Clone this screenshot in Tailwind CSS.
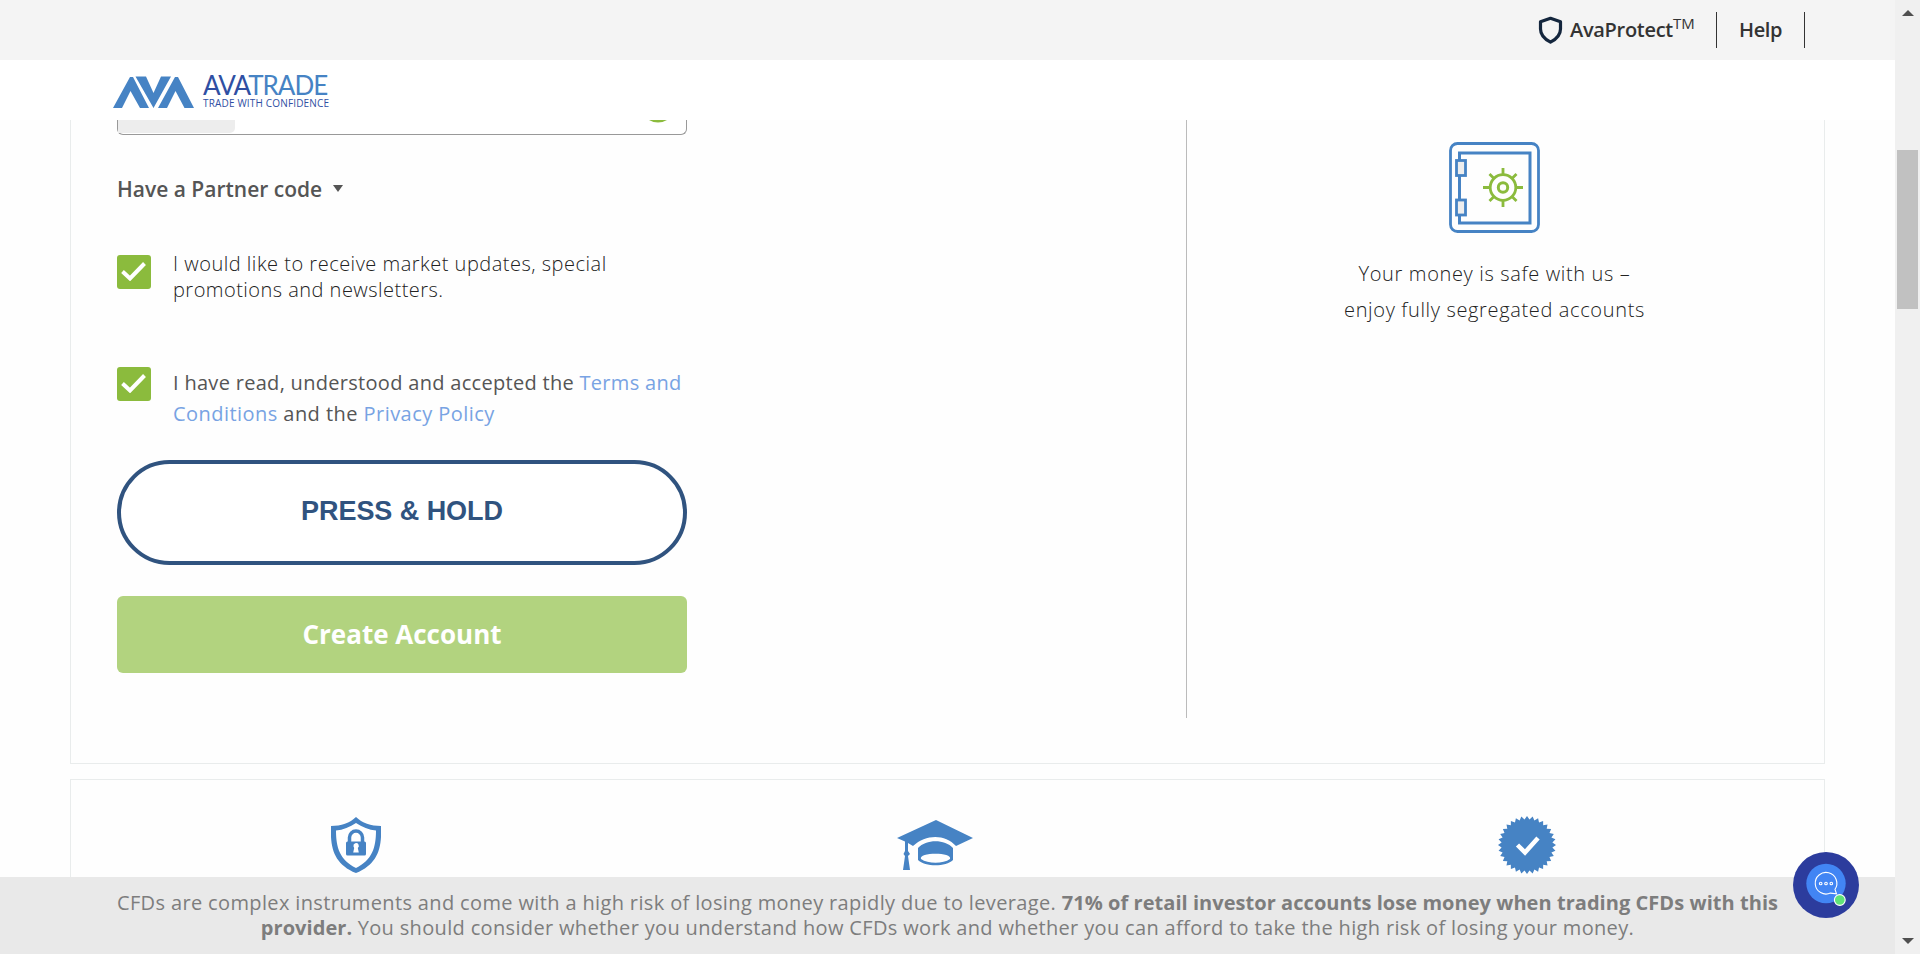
<!DOCTYPE html>
<html lang="en">
<head>
<meta charset="utf-8">
<title>AvaTrade</title>
<script src="https://cdn.jsdelivr.net/npm/@tailwindcss/browser@4"></script>
</head>
<body class="relative flex h-[954px] w-[1920px] overflow-hidden bg-[#fefefe] font-['Open_Sans',sans-serif] whitespace-nowrap">
<div class="flex w-[1895px] flex-col">
  <div class="flex h-[60px] shrink-0 items-center bg-[#f4f4f4] pl-[1538px] text-[20px] leading-[30px] font-semibold text-[#333]">
    <svg class="h-[28px] w-[25px] shrink-0" viewBox="0 0 25 28" fill="none" stroke="#14263d" stroke-width="3.2" stroke-linejoin="round"><path d="M12.500 2.300 22.500 5.800V13c0 6-3.800 10-10 13.200C6.300 23 2.500 19 2.500 13V5.800Z"/></svg>
    <div class="ml-[7px] flex w-[146px] items-center"><span class="tracking-[-0.3px]">AvaProtect</span><span class="pb-[15px] text-[15px] font-normal">TM</span></div>
    <div class="h-9 w-px bg-[#333]"></div>
    <div class="w-[87px] pl-[22px] tracking-[-0.4px]">Help</div>
    <div class="h-9 w-px bg-[#333]"></div>
  </div>
  <header class="flex h-[60px] shrink-0 items-start bg-white pt-[15px] pl-[113px]">
    <svg class="mt-px h-8 w-[81px]" viewBox="0 0 81 32" fill="#4683c4"><path d="M0 32 17 1h3L36 32h-9L17.500 15 9 32Z"/><path d="M22.500.5H33L40.500 17 48 .5h10L40.500 32Z"/><path d="M45 32 62 1h3l16 31h-9.500L62.500 15 54 32Z"/></svg>
    <div class="ml-[9px]">
      <div class="h-[22px] font-['Lato',sans-serif] text-[26px] leading-[20px] font-normal tracking-[-1px] text-[#2f4fa3]">AVA<span class="text-[#4683c4]">TRADE</span></div>
      <div class="text-[10px] leading-[13px] font-medium tracking-[0.17px] text-[#2f4fa3]">TRADE WITH CONFIDENCE</div>
    </div>
  </header>
  <main class="min-h-0 flex-1 overflow-hidden">
    <section class="ml-[70px] flex h-[644px] w-[1755px] border-x border-b border-[#e9ecec] bg-[#fefefe]">
      <div class="w-[1115px] pl-[46px]">
        <div class="flex h-[15px] w-[570px] items-start justify-between rounded-b-[6px] border-x border-b border-[#999] bg-white pr-[18px]">
          <div class="h-[13px] w-[117px] rounded-br-[5px] bg-[#ededed]"></div>
          <svg class="h-[3px] w-[20px]" viewBox="0 0 20 3" fill="#8bbb3d"><path d="M1 0h18q-9 5-18 0Z"/></svg>
        </div>
        <div class="mt-[40px] flex h-[29px] items-center gap-[11px] text-[21px] leading-[29px] font-semibold text-[#555]">
          <span>Have a Partner code</span>
          <svg class="mb-[3px] h-[7px] w-[10px]" viewBox="0 0 10 7" fill="#555"><path d="M0 0h10L5 7Z"/></svg>
        </div>
        <div class="mt-[47px] flex h-[52px] items-start text-[20px] leading-[26px] font-light text-[#222]">
          <div class="mt-1 mr-[22px] flex h-[34px] w-[34px] items-center justify-center rounded-[3px] bg-[#8bbb3d]"><svg class="mr-[2px] mb-px h-[19px] w-[25px]" viewBox="0 0 25 19" fill="none" stroke="#fff" stroke-width="4"><path d="m1.500 9.500 7.500 7L23.500 1.500"/></svg></div>
          <p><span class="tracking-[0.5px]">I would like to receive market updates, special</span><br><span class="tracking-[0.47px]">promotions and newsletters.</span></p>
        </div>
        <div class="mt-[64px] flex h-[62px] items-start text-[20px] leading-[31px] font-normal text-[#555]">
          <div class="mr-[22px] flex h-[34px] w-[34px] items-center justify-center rounded-[3px] bg-[#8bbb3d]"><svg class="mr-[2px] mb-px h-[19px] w-[25px]" viewBox="0 0 25 19" fill="none" stroke="#fff" stroke-width="4"><path d="m1.500 9.500 7.500 7L23.500 1.500"/></svg></div>
          <p><span class="tracking-[0.3px]">I have read, understood and accepted the <span class="text-[#78a3e3]">Terms and</span></span><br><span class="tracking-[0.45px]"><span class="text-[#78a3e3]">Conditions</span> and the <span class="text-[#78a3e3]">Privacy Policy</span></span></p>
        </div>
        <div class="mt-[31px] flex h-[105px] w-[570px] items-center justify-center rounded-full border-4 border-[#30537f] bg-white pb-[2px] font-['Liberation_Sans',sans-serif] text-[27px] font-bold tracking-[-0.05px] text-[#30537f]">PRESS &amp; HOLD</div>
        <div class="mt-[31px] flex h-[77px] w-[570px] items-center justify-center rounded-[6px] bg-[#b2d37f] text-[26px] font-bold text-white">Create Account</div>
      </div>
      <div class="h-[598px] w-px bg-[#bbb]"></div>
      <div class="flex w-[615px] flex-col items-center pt-[22px]">
        <svg class="h-[91px] w-[91px]" viewBox="0 0 91 91" fill="none" stroke="#4683c4" stroke-width="2.800"><rect x="1.500" y="1.500" width="88" height="88" rx="7"/><rect x="10.500" y="11" width="70.500" height="70" stroke-width="3"/><rect x="7.500" y="18.500" width="9" height="15" fill="#eee"/><rect x="7.500" y="58" width="9" height="15" fill="#eee"/><g stroke="#8bbb3d"><circle cx="54" cy="45.500" r="12.800"/><circle cx="54" cy="45.500" r="4.700" stroke-width="3"/><path d="M54 33v-7M54 58v7M41 45.500h-7M67 45.500h7M45 36.500l-4.500-4.500M63 36.500l4.500-4.500M45 54.500l-4.500 4.500M63 54.500l4.500 4.500"/></g></svg>
        <p class="mt-[23px] text-center text-[20px] leading-9 font-light tracking-[0.65px] text-[#222]">Your money is safe with us –<br>enjoy fully segregated accounts</p>
      </div>
    </section>
    <section class="mt-[15px] ml-[70px] flex h-[120px] w-[1755px] items-start border border-[#e9ecec] bg-[#fefefe] pt-9">
      <svg class="mt-[1px] ml-[260px] h-[56px] w-[50px]" viewBox="0 0 50 56"><path fill="#4683c4" d="M25 0C19 6 10 9 0 9c-1 22 3 38 25 47C47 47 51 31 50 9 40 9 31 6 25 0Z"/><path fill="#fff" d="M25 6C19 10 12 13 5 13.500 5 31 9 43 25 51 41 43 45 31 45 13.500 38 13 31 10 25 6Z"/><path fill="none" stroke="#4683c4" stroke-width="3.500" d="M18.500 25v-4.500a6.500 6.500 0 0 1 13 0V25"/><rect x="15" y="24.500" width="20" height="14" rx="1.500" fill="#4683c4"/><path fill="#fff" d="M22.500 29.500a2.700 2.700 0 1 1 4.300 1.500l1 4.500h-5.600l1-4.500Z"/></svg>
      <svg class="mt-1 ml-[516px] h-[50px] w-[76px]" viewBox="0 0 76 50" fill="#4683c4"><path d="M0 18 39 0l37 18-17 8C48 14 29 14 16 26L11 23v8l2 3-2 2 2 14H6l2-14-1.500-2L8 31V21.500Z"/><path fill-rule="evenodd" d="M21 28c8-9 27-9 35 0v12c-7 7-28 7-35 0Zm3 11c7 5 22 5 29 0 3-7-32-7-29 0Z"/></svg>
      <svg class="ml-[525px] h-[58px] w-[58px]" viewBox="-29 -29 58 58"><polygon id="seal" fill="#4683c4"/><path d="M-9.500 0-2 7.500 11-7" fill="none" stroke="#fff" stroke-width="4.500"/></svg>
    </section>
  </main>
  <footer class="h-[77px] shrink-0 bg-[#e9e9e9] pt-[13px] text-center text-[20px] leading-[25px] font-normal text-[#7d7d7d]">
    <p><span class="tracking-[0.36px]">CFDs are complex instruments and come with a high risk of losing money rapidly due to leverage. </span><b class="font-bold tracking-[0.05px]">71% of retail investor accounts lose money when trading CFDs with this</b></p>
    <p class="tracking-[0.34px]"><b class="font-bold tracking-[0.05px]">provider.</b> You should consider whether you understand how CFDs work and whether you can afford to take the high risk of losing your money.</p>
  </footer>
</div>
<aside class="flex w-[25px] flex-col items-center bg-[#f0f0f0] pt-[10px] pb-[10px]">
  <svg class="h-[6px] w-[12px]" viewBox="0 0 12 6" fill="#505050"><path d="M0 6h12L6 0Z"/></svg>
  <div class="mt-[134px] h-[159px] w-[21px] bg-[#c1c1c1]"></div>
  <svg class="mt-auto h-[6px] w-[12px]" viewBox="0 0 12 6" fill="#505050"><path d="M0 0h12L6 6Z"/></svg>
</aside>
<svg class="absolute top-[852px] left-[1793px] h-[66px] w-[66px]" viewBox="0 0 66 66"><circle cx="33" cy="33" r="33" fill="#2c3c9d"/><circle cx="33" cy="31.500" r="19.700" fill="#4285f4"/><g fill="none" stroke="#fff" stroke-width="1.100"><path d="M42 37.300A10.800 10.800 0 1 0 37.500 41.100L43.500 41.800Z"/><circle cx="27.700" cy="31.500" r="1.300"/><circle cx="33" cy="31.500" r="1.300"/><circle cx="38.300" cy="31.500" r="1.300"/></g><circle cx="46.800" cy="48" r="5.400" fill="#5fe378" stroke="#fff" stroke-width="1.100"/></svg>
<script>
// Serrated edge of the verified seal
const points = Array.from({ length: 64 }, (_, i) => {
  const r = i % 2 ? 25.5 : 29, a = i * Math.PI / 32;
  return (r * Math.sin(a)).toFixed(2) + ',' + (-r * Math.cos(a)).toFixed(2);
});
document.getElementById('seal').setAttribute('points', points.join(' '));
</script>
</body>
</html>
